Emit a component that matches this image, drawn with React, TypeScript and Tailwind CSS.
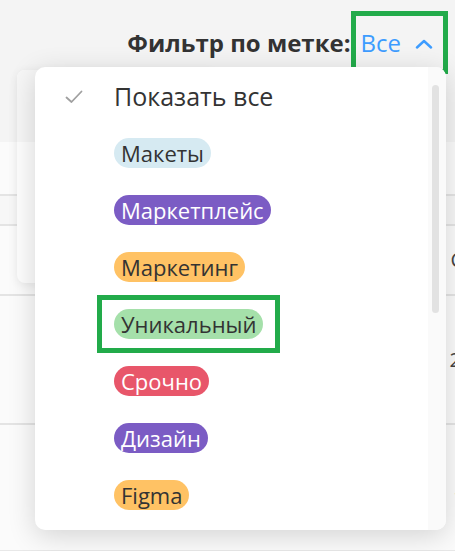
import React from "react";

type Tag = { label: string; bg: string; text: string; marked?: boolean };

const tags: Tag[] = [
  { label: "Макеты", bg: "bg-[#d6eaf2]", text: "text-[#333333]" },
  { label: "Маркетплейс", bg: "bg-[#7b5cc4]", text: "text-white" },
  { label: "Маркетинг", bg: "bg-[#ffc264]", text: "text-[#333333]" },
  { label: "Уникальный", bg: "bg-[#a5e0aa]", text: "text-[#333333]", marked: true },
  { label: "Срочно", bg: "bg-[#e8566a]", text: "text-white" },
  { label: "Дизайн", bg: "bg-[#7b5cc4]", text: "text-white" },
  { label: "Figma", bg: "bg-[#ffc264]", text: "text-[#333333]" },
];

function Pill({ tag }: { tag: Tag }) {
  return (
    <span
      className={`inline-flex h-[30px] items-center rounded-full px-[7px] text-[22px] leading-none ${tag.bg} ${tag.text}`}
    >
      {tag.label}
    </span>
  );
}

export default function App() {
  return (
    <div
      className="relative h-[551px] w-[455px] overflow-hidden bg-[#f4f4f4]"
      style={{ fontFamily: '"Open Sans", "Noto Sans", sans-serif' }}
    >
      {/* filter header */}
      <div className="flex h-[142px] justify-end pr-[7px] pt-[11px]">
        <div className="flex h-[63px] items-center">
          <span className="text-[24px] font-bold text-[#333333]">Фильтр по метке:</span>
          <span className="flex h-full items-center border-[5px] border-[#22ab4a] pl-[5px] pr-[10px]">
            <span className="text-[24px] text-[#3d9cff]">Все</span>
            <svg width="18" height="10" viewBox="0 0 18 10" className="ml-[14px] mt-[2px]">
              <path d="M2 8.5 L9 2 L16 8.5" fill="none" stroke="#3d9cff" strokeWidth="2.4" strokeLinecap="round" strokeLinejoin="round" />
            </svg>
          </span>
        </div>
      </div>

      {/* table behind */}
      <div className="bg-[#fbfbfb]">
        <div className="h-[52px]" />
        <div className="h-[30px] border-t-2 border-[#e4e4e4] bg-[#f7f7f7]" />
        <div className="flex h-[70px] items-center justify-end border-t-2 border-[#e4e4e4] text-[20px] text-[#444]">
          <span className="mr-[-8px]">С</span>
        </div>
        <div className="flex h-[129px] items-center justify-end border-t-2 border-[#e4e4e4] text-[20px] text-[#444]">
          <span className="mr-[-6px]">2</span>
        </div>
        <div className="flex h-[127px] items-center justify-end border-t-2 border-[#e4e4e4] text-[20px] text-[#444]">
          <span className="mr-[-4px]">.</span>
        </div>
        <div className="border-t-2 border-[#e8e8e8]" />
      </div>

      {/* popover card behind dropdown */}
      <div className="absolute left-[17px] top-[70px] h-[213px] w-[200px] overflow-hidden rounded-lg bg-[#fdfdfd] shadow-[0_2px_10px_rgba(0,0,0,0.08)]">
        <div className="h-[72px] bg-[#f6f6f6]" />
      </div>

      {/* dropdown */}
      <div className="absolute left-[35px] top-[67px] flex h-[463px] w-[411px] overflow-hidden rounded-[10px] bg-white shadow-[0_6px_28px_rgba(0,0,0,0.16)]">
        <div className="flex-1">
          <div className="flex h-[57px] items-center pt-[2px]">
            <svg width="18" height="14" viewBox="0 0 18 14" className="ml-[30px]">
              <path d="M1.5 7.5 L6.5 12 L16.5 1.5" fill="none" stroke="#a0a0a0" strokeWidth="1.8" strokeLinecap="round" strokeLinejoin="round" />
            </svg>
            <span className="ml-[31px] text-[25px] text-[#333333]">Показать все</span>
          </div>
          {tags.map((tag) => (
            <div key={tag.label} className="flex h-[57px] items-center pl-[79px]">
              {tag.marked ? (
                <span className="ml-[-17px] inline-flex border-[5px] border-[#22ab4a] px-[12px] py-[9px]">
                  <Pill tag={tag} />
                </span>
              ) : (
                <Pill tag={tag} />
              )}
            </div>
          ))}
        </div>
        <div className="w-[18px] bg-[#fafafa] pl-[4px] pt-[18px]">
          <div className="h-[228px] w-[7px] rounded-full bg-[#e2e2e2]" />
        </div>
      </div>
    </div>
  );
}
